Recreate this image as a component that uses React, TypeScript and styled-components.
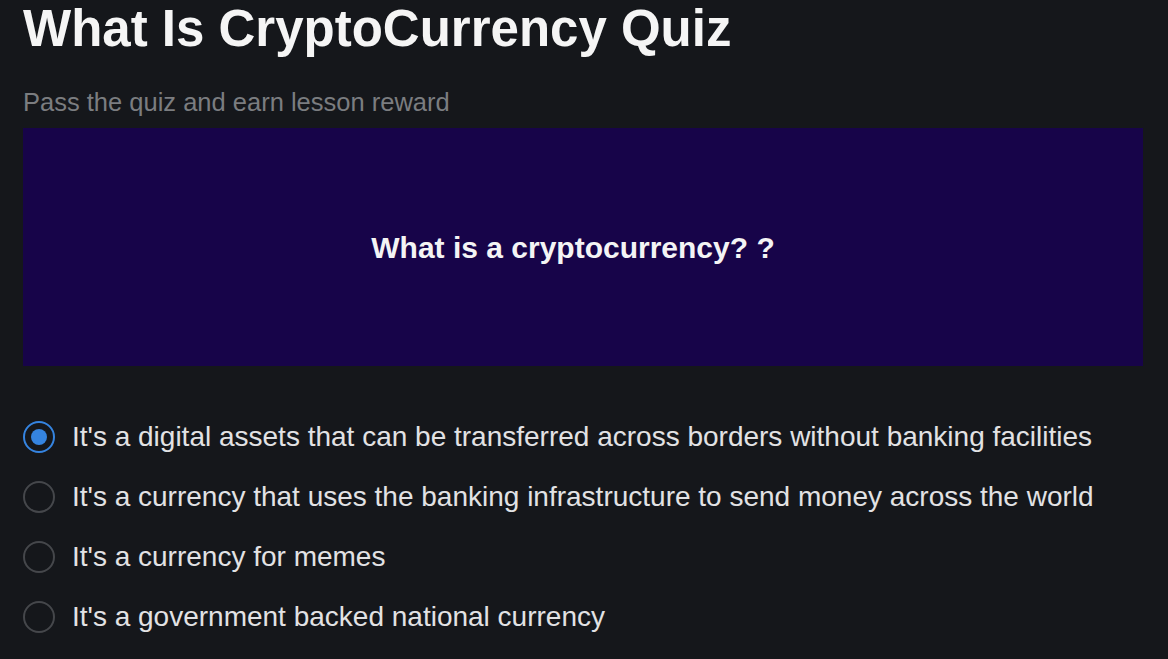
import React, {useState} from "react";
import styled, {createGlobalStyle} from "styled-components";

const GlobalStyles = createGlobalStyle`
  html, body {
    margin: 0;
    padding: 0;
    background: #15171b;
  }

  body {
    font-family: "Liberation Sans", Arial, Helvetica, sans-serif;
    color: #f4f4f5;
  }
`;

const options = [
    "It's a digital assets that can be transferred across borders without banking facilities",
    "It's a currency that uses the banking infrastructure to send money across the world",
    "It's a currency for memes",
    "It's a government backed national currency",
];

function App() {
    const [selected, setSelected] = useState(0);
    return (
        <>
            <GlobalStyles/>
            <Container>
                <Title>What Is CryptoCurrency Quiz</Title>
                <Subtitle>Pass the quiz and earn lesson reward</Subtitle>
                <QuestionBox>
                    <Question>What is a cryptocurrency? ?</Question>
                </QuestionBox>
                <OptionList>
                    {options.map((text, i) => (
                        <Option key={i} onClick={() => setSelected(i)}>
                            <Radio $checked={selected === i}/>
                            <OptionText>{text}</OptionText>
                        </Option>
                    ))}
                </OptionList>
            </Container>
        </>
    );
}

export default App;

const Container = styled.div`
  width: 1168px;
  padding: 0 25px 0 23px;
  min-height: 659px;
  box-sizing: border-box;
`;

const Title = styled.h1`
  margin: 0;
  padding-top: 1px;
  font-size: 51px;
  line-height: 56px;
  font-weight: 700;
  color: #f5f5f5;
`;

const Subtitle = styled.p`
  margin: 30px 0 0;
  font-size: 25.5px;
  line-height: 30px;
  color: #7b7d80;
`;

const QuestionBox = styled.div`
  margin-top: 11px;
  height: 238px;
  padding-right: 20px;
  box-sizing: border-box;
  background: #170449;
  display: flex;
  align-items: center;
  justify-content: center;
`;

const Question = styled.h2`
  margin: 0;
  padding-top: 2px;
  font-size: 30px;
  line-height: 34px;
  font-weight: 700;
  color: #f4f4f5;
`;

const OptionList = styled.div`
  margin-top: 55px;
  display: flex;
  flex-direction: column;
  gap: 28px;
`;

const Option = styled.label`
  display: flex;
  align-items: center;
  gap: 17px;
  height: 32px;
  cursor: pointer;
`;

const Radio = styled.span<{ $checked: boolean }>`
  flex: none;
  width: 32px;
  height: 32px;
  box-sizing: border-box;
  border-radius: 50%;
  border: 2px solid ${p => p.$checked ? "#3584e0" : "#45474b"};
  display: flex;
  align-items: center;
  justify-content: center;

  &::after {
    content: "";
    width: 16px;
    height: 16px;
    border-radius: 50%;
    background: #3584e0;
    display: ${p => p.$checked ? "block" : "none"};
  }
`;

const OptionText = styled.span`
  font-size: 28px;
  line-height: 32px;
  color: #e2e2e4;
`;
